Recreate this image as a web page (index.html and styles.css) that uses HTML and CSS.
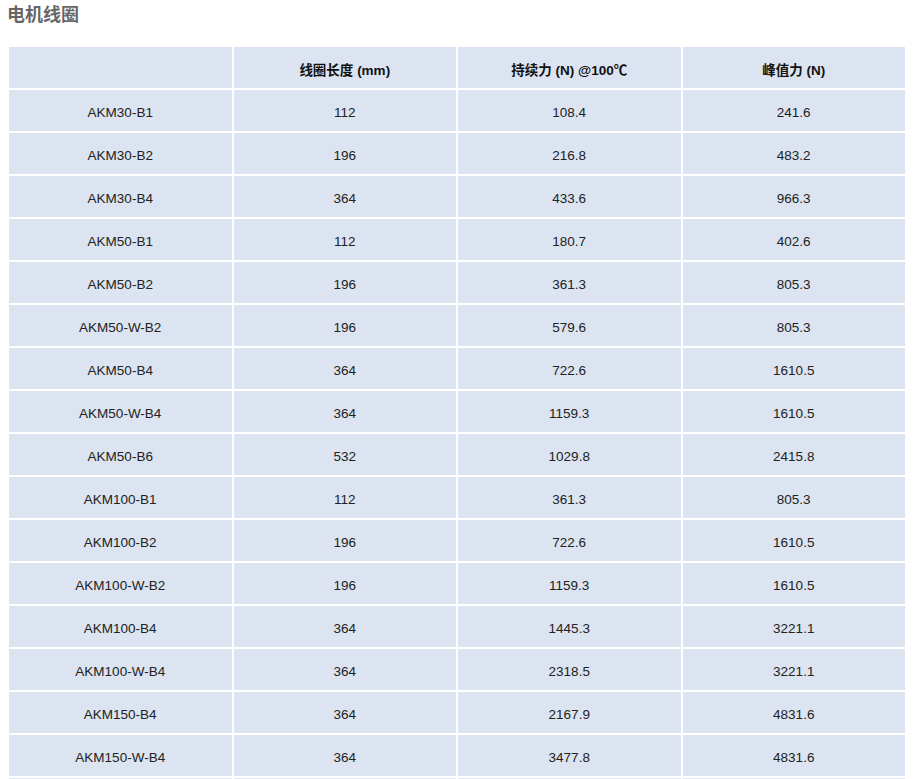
FILE: index.html
```html
<!DOCTYPE html>
<html lang="zh">
<head>
<meta charset="utf-8">
<title>电机线圈</title>
<link rel="stylesheet" href="styles.css">
</head>
<body>
<h3 class="title">电机线圈</h3>
<table class="spec">
  <thead>
    <tr><th></th><th>线圈长度 (mm)</th><th>持续力 (N) @100℃</th><th>峰值力 (N)</th></tr>
  </thead>
  <tbody>
    <tr><td>AKM30-B1</td><td>112</td><td>108.4</td><td>241.6</td></tr>
    <tr><td>AKM30-B2</td><td>196</td><td>216.8</td><td>483.2</td></tr>
    <tr><td>AKM30-B4</td><td>364</td><td>433.6</td><td>966.3</td></tr>
    <tr><td>AKM50-B1</td><td>112</td><td>180.7</td><td>402.6</td></tr>
    <tr><td>AKM50-B2</td><td>196</td><td>361.3</td><td>805.3</td></tr>
    <tr><td>AKM50-W-B2</td><td>196</td><td>579.6</td><td>805.3</td></tr>
    <tr><td>AKM50-B4</td><td>364</td><td>722.6</td><td>1610.5</td></tr>
    <tr><td>AKM50-W-B4</td><td>364</td><td>1159.3</td><td>1610.5</td></tr>
    <tr><td>AKM50-B6</td><td>532</td><td>1029.8</td><td>2415.8</td></tr>
    <tr><td>AKM100-B1</td><td>112</td><td>361.3</td><td>805.3</td></tr>
    <tr><td>AKM100-B2</td><td>196</td><td>722.6</td><td>1610.5</td></tr>
    <tr><td>AKM100-W-B2</td><td>196</td><td>1159.3</td><td>1610.5</td></tr>
    <tr><td>AKM100-B4</td><td>364</td><td>1445.3</td><td>3221.1</td></tr>
    <tr><td>AKM100-W-B4</td><td>364</td><td>2318.5</td><td>3221.1</td></tr>
    <tr><td>AKM150-B4</td><td>364</td><td>2167.9</td><td>4831.6</td></tr>
    <tr><td>AKM150-W-B4</td><td>364</td><td>3477.8</td><td>4831.6</td></tr>
    <tr><td></td><td></td><td></td><td></td></tr>
  </tbody>
</table>
</body>
</html>
```
FILE: styles.css
```css
body {
  margin: 0;
  padding: 0 7px;
  background: #fff;
  font-family: "Liberation Sans", Arial, "Noto Sans CJK SC", sans-serif;
  color: #222;
}
.title {
  margin: 0;
  padding-top: 4px;
  height: 44px;
  box-sizing: border-box;
  font-size: 18px;
  line-height: 22px;
  font-weight: bold;
  color: #666;
}
.spec {
  width: 900px;
  border-collapse: separate;
  border-spacing: 2px;
  table-layout: fixed;
  margin-top: 1px;
}
.spec th,
.spec td {
  background: #dbe4f0;
  height: 38px;
  padding: 3px 0 0;
  text-align: center;
  vertical-align: middle;
  font-size: 13.5px;
  color: #222;
}
.spec th {
  font-weight: bold;
  color: #111;
}
```
